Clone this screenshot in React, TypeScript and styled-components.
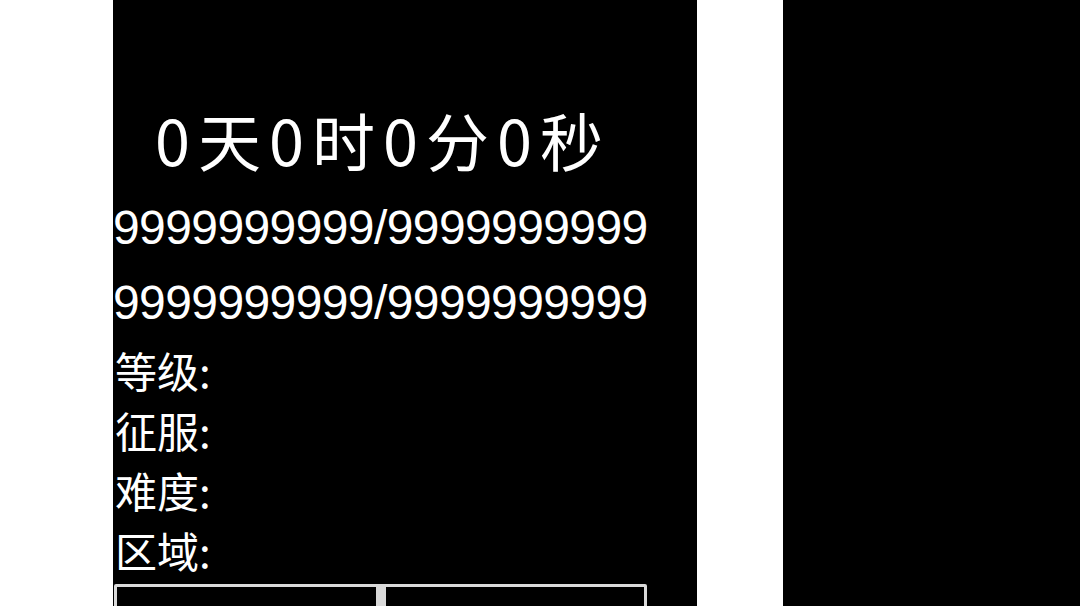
import React from "react";
import styled, { createGlobalStyle } from "styled-components";

const Global = createGlobalStyle`
  html, body { margin: 0; padding: 0; background: #ffffff; }
  body { font-family: "Noto Sans CJK SC", "Noto Sans", sans-serif; }
`;

const Page = styled.div`
  display: flex;
  width: 1080px;
  height: 606px;
  overflow: hidden;
  background: #ffffff;
`;

const Spacer = styled.div<{ $w: number }>`
  flex: 0 0 ${(p) => p.$w}px;
`;

const Panel = styled.div<{ $w: number }>`
  flex: 0 0 ${(p) => p.$w}px;
  height: 606px;
  background: #000000;
  color: #ffffff;
  overflow: hidden;
`;

const Content = styled.div`
  width: 536px;
  display: flex;
  flex-direction: column;
  padding-top: 102px;
`;

const Title = styled.div`
  font-family: "Noto Sans CJK SC", sans-serif;
  font-size: 63px;
  line-height: 74px;
  letter-spacing: 8px;
  text-indent: 4px;
  text-align: center;
  white-space: nowrap;
  margin-bottom: 14px;
`;

const Counter = styled.div`
  font-family: "Liberation Sans", Arial, sans-serif;
  font-size: 48px;
  line-height: 75px;
  letter-spacing: -0.6px;
  white-space: nowrap;
`;

const Label = styled.div`
  font-family: "Noto Sans CJK SC", sans-serif;
  font-size: 42px;
  line-height: 60px;
  padding-left: 2px;
  white-space: nowrap;
`;

const ButtonRow = styled.div`
  margin-top: 4px;
  margin-left: 1px;
  width: 533px;
  display: flex;
  gap: 10px;
  padding: 3px;
  box-sizing: border-box;
  background: #d9d9d9;
  border-radius: 2px;
`;

const Button = styled.button`
  flex: 1;
  height: 60px;
  border: none;
  background: #000000;
  padding: 0;
`;

export default function App() {
  return (
    <>
      <Global />
      <Page>
        <Spacer $w={113} />
        <Panel $w={584}>
          <Content>
            <Title>0天0时0分0秒</Title>
            <Counter>9999999999/9999999999</Counter>
            <Counter>9999999999/9999999999</Counter>
            <Label>等级:</Label>
            <Label>征服:</Label>
            <Label>难度:</Label>
            <Label>区域:</Label>
            <ButtonRow>
              <Button />
              <Button />
            </ButtonRow>
          </Content>
        </Panel>
        <Spacer $w={86} />
        <Panel $w={297} />
      </Page>
    </>
  );
}
